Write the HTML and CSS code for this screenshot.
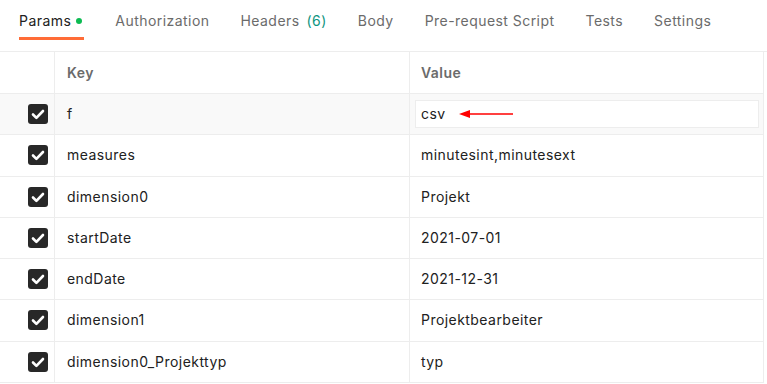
FILE: index.html
```html
<!DOCTYPE html>
<html lang="en">
<head>
    <meta charset="UTF-8">
    <title>Params</title>
    <link rel="stylesheet" href="styles.css">
</head>
<body>
    <div class="tabs">
        <div class="tab active">Params<span class="dot"></span></div>
        <div class="tab">Authorization</div>
        <div class="tab">Headers<span class="count">(6)</span></div>
        <div class="tab">Body</div>
        <div class="tab">Pre-request Script</div>
        <div class="tab">Tests</div>
        <div class="tab">Settings</div>
    </div>

    <div class="params">
        <div class="row head">
            <div class="cell check"></div>
            <div class="cell">Key</div>
            <div class="cell">Value</div>
        </div>
        <div class="row hover">
            <div class="cell check"><span class="box"><svg viewBox="0 0 20 20"><path d="M5 10.5l3.4 3.4L15 7"/></svg></span></div>
            <div class="cell">f</div>
            <div class="cell edit">
                <div class="input">csv
                    <svg class="arrow" viewBox="0 0 56 10"><path d="M0 5L11 1V9Z" fill="#f00"/><path d="M10 5H54" stroke="#f00" stroke-width="1.3"/></svg>
                </div>
            </div>
        </div>
        <div class="row">
            <div class="cell check"><span class="box"><svg viewBox="0 0 20 20"><path d="M5 10.5l3.4 3.4L15 7"/></svg></span></div>
            <div class="cell">measures</div>
            <div class="cell">minutesint,minutesext</div>
        </div>
        <div class="row">
            <div class="cell check"><span class="box"><svg viewBox="0 0 20 20"><path d="M5 10.5l3.4 3.4L15 7"/></svg></span></div>
            <div class="cell">dimension0</div>
            <div class="cell">Projekt</div>
        </div>
        <div class="row">
            <div class="cell check"><span class="box"><svg viewBox="0 0 20 20"><path d="M5 10.5l3.4 3.4L15 7"/></svg></span></div>
            <div class="cell">startDate</div>
            <div class="cell">2021-07-01</div>
        </div>
        <div class="row">
            <div class="cell check"><span class="box"><svg viewBox="0 0 20 20"><path d="M5 10.5l3.4 3.4L15 7"/></svg></span></div>
            <div class="cell">endDate</div>
            <div class="cell">2021-12-31</div>
        </div>
        <div class="row">
            <div class="cell check"><span class="box"><svg viewBox="0 0 20 20"><path d="M5 10.5l3.4 3.4L15 7"/></svg></span></div>
            <div class="cell">dimension1</div>
            <div class="cell">Projektbearbeiter</div>
        </div>
        <div class="row">
            <div class="cell check"><span class="box"><svg viewBox="0 0 20 20"><path d="M5 10.5l3.4 3.4L15 7"/></svg></span></div>
            <div class="cell">dimension0_Projekttyp</div>
            <div class="cell">typ</div>
        </div>
    </div>
</body>
</html>
```

FILE: styles.css
```css
body {
    margin: 0;
    background-color: white;
    font-family: Inter, "Noto Sans", sans-serif;
    font-size: 14px;
    line-height: 20px;
    letter-spacing: 0.45px;
    color: #212121;
    overflow: hidden;
}
.tabs {
    display: flex;
    gap: 31px;
    padding-left: 19px;
    height: 51px;
    border-bottom: 1px solid #ededed;
}
.tab {
    padding: 11px 0 6px;
    color: #6b6b6b;
    white-space: nowrap;
    align-self: flex-start;
}
.tab.active {
    color: #212121;
    border-bottom: 3px solid #ff6c37;
}
.dot {
    display: inline-block;
    width: 6px;
    height: 6px;
    margin: 0 2px 0 5px;
    border-radius: 50%;
    background-color: #0cbb52;
    vertical-align: 2px;
}
.count {
    margin-left: 7px;
    color: #10957f;
}
/* Params table */
.params {
    width: 764px;
}
.row {
    display: grid;
    grid-template-columns: 55px 355px 354px;
    height: 40.25px;
    border-bottom: 1px solid #ededed;
}
.row.head {
    height: 41px;
    font-weight: 600;
    color: #6b6b6b;
}
.row.hover {
    background-color: #f9f9f9;
}
.cell {
    display: flex;
    align-items: center;
    padding-left: 11px;
    border-right: 1px solid #ededed;
    white-space: nowrap;
}
.cell:nth-child(2) {
    padding-left: 12px;
}
.cell.check {
    justify-content: flex-end;
    padding: 0 6px 0 0;
}
.box {
    display: block;
    width: 20px;
    height: 20px;
    border-radius: 3px;
    background-color: #282828;
}
.box svg {
    display: block;
    width: 20px;
    height: 20px;
    fill: none;
    stroke: white;
    stroke-width: 2.6;
    stroke-linecap: round;
    stroke-linejoin: round;
}
.cell.edit {
    padding: 0 4px 0 5px;
}
.input {
    position: relative;
    flex: 1;
    height: 26px;
    padding-left: 5px;
    border: 1px solid #ededed;
    background-color: white;
    line-height: 26px;
}
.arrow {
    position: absolute;
    left: 43px;
    top: 8px;
    width: 56px;
    height: 10px;
}
```
